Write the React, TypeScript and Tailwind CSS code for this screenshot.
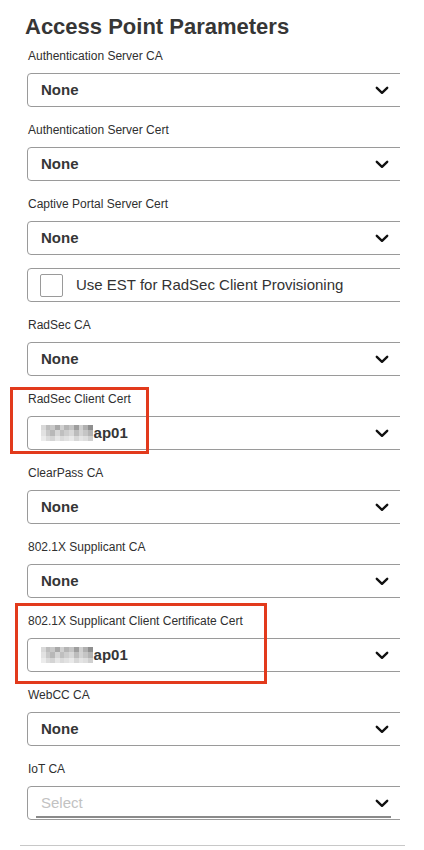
import React from "react";

const Chevron = () => (
  <svg width="14" height="9" viewBox="0 0 14 9" className="shrink-0 mr-[1px]">
    <polyline points="1.8,1.8 7,6.8 12.2,1.8" fill="none" stroke="#111" strokeWidth="2.4" strokeLinecap="round" strokeLinejoin="round" />
  </svg>
);

const blurA = ["#d9d9d9", "#bdbdbd", "#c8c8c8", "#a9a9a9", "#d0d0d0", "#b5b5b5", "#c4c4c4", "#9e9e9e", "#cfcfcf", "#b0b0b0", "#8f8f8f"];
const blurB = ["#e2e2e2", "#c9c9c9", "#b8b8b8", "#d6d6d6", "#bfbfbf", "#cdcdcd", "#d8d8d8", "#bcbcbc", "#d3d3d3", "#c5c5c5", "#b3b3b3"];
const blurC = ["#ececec", "#dcdcdc", "#d4d4d4", "#e6e6e6", "#dadada", "#e1e1e1", "#e9e9e9", "#d7d7d7", "#e4e4e4", "#dedede", "#cfcfcf"];

const Blurred = () => (
  <div className="flex flex-col mr-[1px]">
    {[blurA, blurB, blurC].map((row, i) => (
      <div key={i} className="flex">
        {row.map((c, j) => (
          <div key={j} className="w-[4.7px] h-[5.5px]" style={{ backgroundColor: c }} />
        ))}
      </div>
    ))}
  </div>
);

const Label = ({ children }: { children: React.ReactNode }) => (
  <div className="h-4 leading-4 text-[12px] text-[#2f2f2f] pl-[1px]">{children}</div>
);

const SelectBox = ({ value, blurred, placeholder }: { value?: string; blurred?: boolean; placeholder?: string }) => (
  <div className="mt-[9px] h-[34px] w-[400px] border border-[#9a9a9a] rounded-[4px] flex items-center pl-[13px] pr-[36px] relative bg-white">
    {blurred && <Blurred />}
    {placeholder ? (
      <span className="flex-1 text-[15px] text-[#c2c2c2]">{placeholder}</span>
    ) : (
      <span className="flex-1 text-[15px] text-[#363636] font-bold">{value}</span>
    )}
    <Chevron />
    {placeholder && <div className="absolute left-[8px] right-[35px] bottom-[1px] h-[2px] bg-[#8a8a8a]" />}
  </div>
);

const Field = ({ label, value, blurred, placeholder }: { label: string; value?: string; blurred?: boolean; placeholder?: string }) => (
  <div className="mt-[15px] first:mt-0">
    <Label>{label}</Label>
    <SelectBox value={value} blurred={blurred} placeholder={placeholder} />
  </div>
);

export default function App() {
  return (
    <div className="w-[424px] h-[850px] bg-white relative overflow-hidden" style={{ fontFamily: '"Liberation Sans", Arial, sans-serif' }}>
      <div className="pl-[25px] pt-[13px] h-[48px]">
        <h1 className="text-[22px] leading-[28px] font-bold text-[#363636]">Access Point Parameters</h1>
      </div>
      <div className="w-[400px] overflow-hidden pl-[27px]">
        <Field label="Authentication Server CA" value="None" />
        <Field label="Authentication Server Cert" value="None" />
        <Field label="Captive Portal Server Cert" value="None" />
        <div className="mt-[13px] h-[34px] w-[400px] border border-[#9a9a9a] rounded-[4px] flex items-center pl-[12px]">
          <div className="w-[23px] h-[23px] border border-[#9a9a9a] rounded-[2px] bg-white" />
          <span className="ml-[13px] text-[15px] text-[#333]">Use EST for RadSec Client Provisioning</span>
        </div>
        <Field label="RadSec CA" value="None" />
        <Field label="RadSec Client Cert" value="ap01" blurred />
        <Field label="ClearPass CA" value="None" />
        <Field label="802.1X Supplicant CA" value="None" />
        <Field label="802.1X Supplicant Client Certificate Cert" value="ap01" blurred />
        <Field label="WebCC CA" value="None" />
        <Field label="IoT CA" placeholder="Select" />
      </div>
      <div className="absolute left-[20px] top-[845px] w-[385px] h-[1px] bg-[#c8c8c8]" />
      <div className="absolute left-[10px] top-[387px] w-[139px] h-[67px] border-[3px] border-[#e23a1c]" />
      <div className="absolute left-[15px] top-[603px] w-[252px] h-[81px] border-[3px] border-[#e23a1c]" />
    </div>
  );
}
